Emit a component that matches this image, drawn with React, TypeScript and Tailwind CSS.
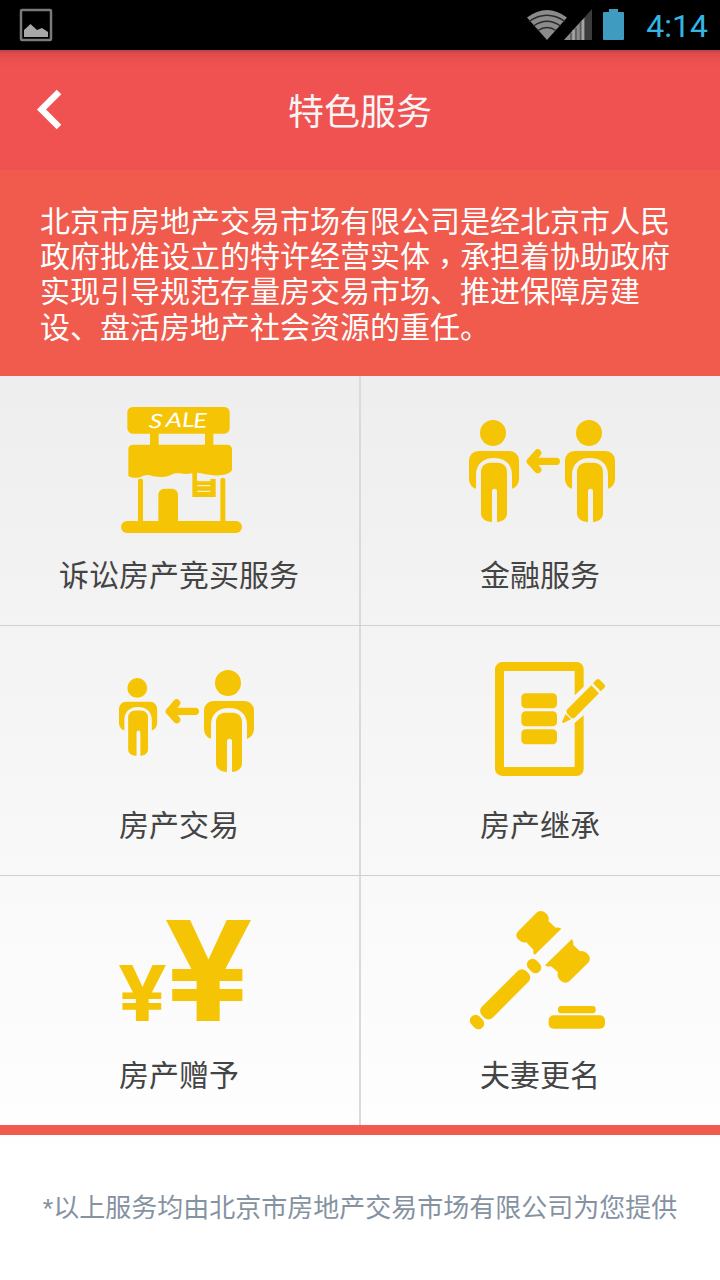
import type { ReactNode } from "react";

const GOLD = "#f5c505";

const Person = ({ transform }: { transform: string }) => (
  <g transform={transform}>
    <circle cx="72" cy="39" r="39" />
    <path d="M28 93H122a28 28 0 0 1 28 28V176c0 15-9 27-21 30V165C129 132 107 114 75 114S21 132 21 165V206C9 203 0 191 0 176V121a28 28 0 0 1 28-28Z" />
    <path d="M62 128H88a26 26 0 0 1 26 26V280c0 15-13 26-30 26V214a7.500 7.500 0 0 0-15 0V306c-20 0-33-11-33-26V154a26 26 0 0 1 26-26Z" />
  </g>
);

const Arrow = ({ x }: { x: number }) => (
  <path
    d="M22 0 L0 25 L22 50 M0 25 H78"
    transform={`translate(${x} 159)`}
    fill="none"
    stroke={GOLD}
    strokeWidth="22"
    strokeLinecap="round"
    strokeLinejoin="round"
  />
);

const Icon = ({ viewBox, children }: { viewBox: string; children: ReactNode }) => (
  <svg viewBox={viewBox} className="w-[180px] h-[140px] overflow-visible" fill={GOLD}>
    {children}
  </svg>
);

const ShopIcon = () => (
  <Icon viewBox="-30 30 540 420">
    <rect x="82" y="51" width="307" height="80" rx="16" />
    <rect x="150" y="128" width="26" height="40" />
    <rect x="315" y="128" width="25" height="40" />
    <path d="M98 164H382a14 14 0 0 1 14 14V240C388 256 350 262 304 250C290 246 280 250 262 252C240 253 232 246 214 254C196 264 166 262 150 256C140 253 132 256 124 260C110 266 92 264 85 258V178a14 14 0 0 1 13-14Z" />
    <path d="M114 396V271a8 8 0 0 1 15 0V396ZM361 396V271a7.500 7.500 0 0 1 15 0V396Z" />
    <path d="M175 396V314a18 18 0 0 1 18-18H216a18 18 0 0 1 18 18V396Z" />
    <path d="M277 245H291V271H331V267H347V321H277Z" />
    <path d="M292 272H331M292 287H331M292 304H331" stroke="#f4efd8" strokeWidth="4" />
    <rect x="63" y="393" width="363" height="36" rx="18" />
    <text
      transform="scale(1.3 1)"
      x="112 151 190 216"
      y="113 110 111 113"
      rotate="5 2 -2 -2"
      fill="#fff"
      fontSize="60"
      fontStyle="italic"
      fontFamily="Lato, sans-serif"
    >
      SALE
    </text>
  </Icon>
);

const FinanceIcon = () => (
  <Icon viewBox="0 0 540 420">
    <Person transform="translate(57 60)" />
    <Arrow x={241} />
    <Person transform="translate(345 60)" />
  </Icon>
);

const TradeIcon = () => (
  <Icon viewBox="-30 0 540 420">
    <Person transform="translate(57 84) scale(0.763)" />
    <Arrow x={208} />
    <Person transform="translate(312 60)" />
  </Icon>
);

const InheritIcon = () => (
  <Icon viewBox="-90 0 540 420">
    <path d="M67 36H290a21 21 0 0 1 21 21V110L284 136V63H72V351H284V219L311 196V357a21 21 0 0 1-21 21H67a22 22 0 0 1-22-22V58a22 22 0 0 1 22-22Z" />
    <rect x="124" y="130" width="107" height="45" rx="13" />
    <rect x="124" y="184" width="107" height="45" rx="13" />
    <rect x="124" y="238" width="107" height="45" rx="13" />
    <path d="M334 106L357 130L284 203Q278 207 273 203L261 190Q257 184 262 178Z" />
    <path d="M339 100L348 90Q353 85 359 89L373 103Q378 109 373 114L362 124Z" />
    <path d="M257 192L273 208L252 218Q245 221 247 213Z" />
  </Icon>
);

const GiftIcon = () => (
  <Icon viewBox="-30 0 540 420">
    <g fontFamily="Inter, sans-serif" fontWeight="700" textAnchor="middle">
      <text fontSize="416" transform="translate(325.500 362) scale(1.13 1)">¥</text>
      <text fontSize="230" transform="translate(127 362) scale(1.13 1)">¥</text>
    </g>
  </Icon>
);

const GavelIcon = () => (
  <Icon viewBox="0 0 540 420">
    <path d="M261 37Q274 28 286 38Q300 50 295 63L317 83Q326 82 334 86L254 165Q248 160 250 149L229 127Q216 130 204 118Q194 106 203 95Z" />
    <path d="M366 117Q371 124 370 135L390 154Q402 151 413 162Q425 175 416 187L358 244Q346 253 333 243Q319 232 324 217L303 199Q292 201 285 196Z" />
    <rect x="-23" y="-17" width="46" height="34" rx="16" transform="translate(252 198) rotate(45)" />
    <rect x="-94" y="-23" width="188" height="46" rx="18" transform="translate(165.500 283) rotate(-45)" />
    <rect x="-23" y="-17" width="46" height="34" rx="16" transform="translate(81 366) rotate(45)" />
    <rect x="324" y="318" width="113" height="22" rx="9" />
    <rect x="296" y="346" width="169" height="40" rx="15" />
  </Icon>
);

const services = [
  { name: "诉讼房产竞买服务", icon: <ShopIcon /> },
  { name: "金融服务", icon: <FinanceIcon /> },
  { name: "房产交易", icon: <TradeIcon /> },
  { name: "房产继承", icon: <InheritIcon /> },
  { name: "房产赠予", icon: <GiftIcon /> },
  { name: "夫妻更名", icon: <GavelIcon /> },
];

const StatusBar = () => (
  <div className="h-[50px] bg-black flex items-center justify-between pl-[19px] pr-3">
    <svg viewBox="0 0 34 34" className="w-[34px] h-[34px]">
      <rect x="2" y="2" width="30" height="30" rx="1" fill="none" stroke="#7a7a7a" strokeWidth="2.500" />
      <path d="M5 29V22L11.500 16L18 22L23 20L29 24V29Z" fill="#a8a8a8" />
    </svg>

    <div className="flex items-center">
      {/* Wifi */}
      <svg viewBox="0 0 40 32" className="w-10 h-8">
        <path d="M20 31L0 8.500Q20-6.500 40 8.500Z" fill="#8b8b8b" />
        <path
          d="M2 12.500Q20 0 38 12.500M6.500 17Q20 7.500 33.500 17M11 21.500Q20 15.500 29 21.500"
          fill="none"
          stroke="#2a2a2a"
          strokeWidth="1.500"
        />
      </svg>
      {/* Signal */}
      <svg viewBox="0 0 28 32" className="w-7 h-8 -ml-[3px]">
        <path d="M0 31L28 0V31Z" fill="#3c3c3c" />
        <path d="M0 31L20.500 8.500V31Z" fill="#8b8b8b" />
        <path d="M7 24V31M12 19V31M16.500 13V31" stroke="#5a5a5a" strokeWidth="1.500" />
        <path d="M9.500 21V31M19 11V31" stroke="#a5a5a5" strokeWidth="2" />
      </svg>
      {/* Battery */}
      <svg viewBox="0 0 21 32" className="w-[21px] h-8 ml-[11px]">
        <path d="M6 0H15V3H20Q21 3 21 4V30Q21 31 20 31H1Q0 31 0 30V4Q0 3 1 3H6Z" fill="#409bc0" />
      </svg>
      <span className="ml-[22px] pt-0.5 text-[32px] leading-[48px] text-[#33b5e5] font-[Roboto,sans-serif]">
        4:14
      </span>
    </div>
  </div>
);

const App = () => {
  return (
    <div className="w-[720px] h-[1280px] flex flex-col overflow-hidden bg-white font-['Noto_Sans_CJK_SC',sans-serif]">
      <StatusBar />

      {/* Header */}
      <header className="h-[120px] bg-[#f05251] bg-[linear-gradient(to_bottom,#b9403f_0px,#dc4b4a_3px,#e84f4e_8px,#f05251_18px)] grid grid-cols-[80px_1fr_80px] items-center">
        <button type="button" className="pl-9">
          <svg viewBox="0 0 26 42" className="w-[26px] h-[42px]">
            <path d="M23 3L5.500 20.500L23 38" fill="none" stroke="#fff" strokeWidth="6.500" />
          </svg>
        </button>
        <h1 className="pb-[3px] text-center text-[36px] leading-[48px] text-[#f5f5f5]">特色服务</h1>
      </header>

      {/* Intro */}
      <p className="h-[206px] bg-[#f05b4d] pl-10 pt-8 text-[30px] leading-[35.200px] text-white whitespace-nowrap">
        北京市房地产交易市场有限公司是经北京市人民
        <br />
        政府批准设立的特许经营实体
        <span className="relative top-[7px] font-['Noto_Sans_CJK_TC',sans-serif]" lang="zh-TW">
          ，
        </span>
        承担着协助政府
        <br />
        实现引导规范存量房交易市场、推进保障房建
        <br />
        设、盘活房地产社会资源的重任。
      </p>

      <div className="flex-1 flex flex-col bg-[linear-gradient(to_bottom,#eeeeee,#ffffff_88%)]">
        {/* Services */}
        <div className="grid grid-cols-2 grid-rows-[250px_250px_249px]">
          {services.map((item, index) => (
            <div
              key={item.name}
              className={`flex flex-col items-center pt-6 border-b-[#d0d0d0] border-r-[#dadada] ${
                index % 2 === 0 ? "border-r-2 pl-px mr-[-1px]" : ""
              } ${index < 4 ? "border-b" : ""}`}
            >
              {item.icon}
              <span
                className={`mt-[15px] text-[30px] leading-9 text-[#444444] ${
                  index % 2 === 0 ? "mr-0.5" : ""
                }`}
              >
                {item.name}
              </span>
            </div>
          ))}
        </div>

        {/* Footer */}
        <footer className="flex-1 border-t-[10px] border-[#f05b4d] pt-[53px] text-center text-[26px] leading-9 text-[#8592a2] whitespace-nowrap">
          <span className="relative -top-px text-[24px] font-[Roboto,sans-serif]">*</span>
          以上服务均由北京市房地产交易市场有限公司为您提供
        </footer>
      </div>
    </div>
  );
};

export default App;
